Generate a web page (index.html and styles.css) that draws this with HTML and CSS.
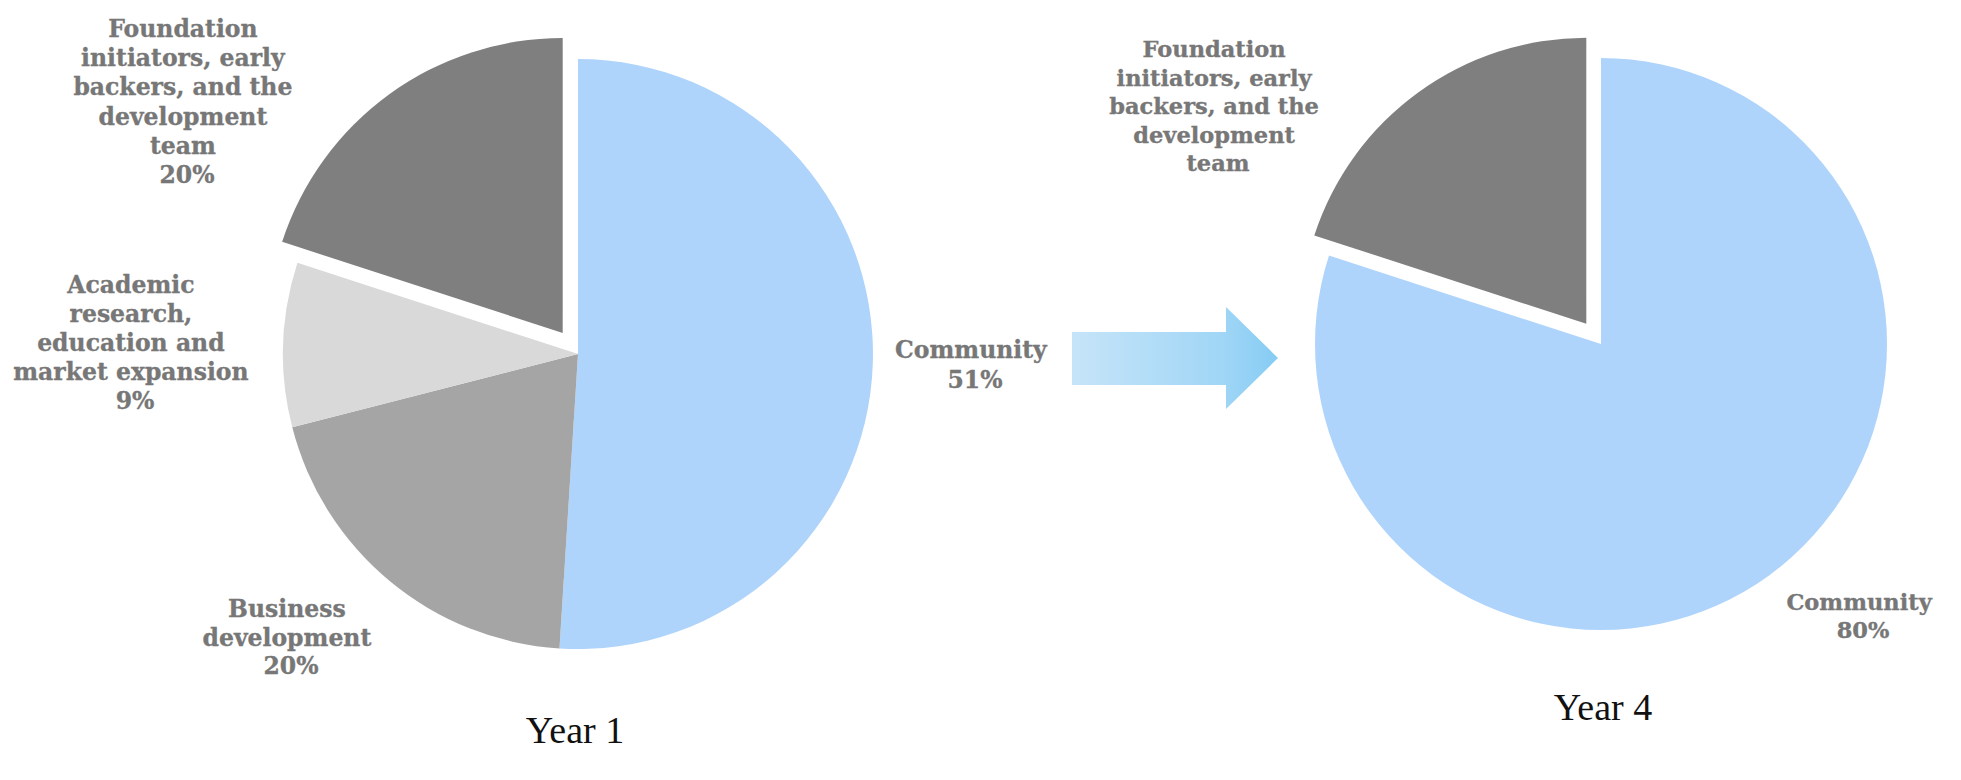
FILE: index.html
```html
<!DOCTYPE html>
<html lang="en">
<head>
<meta charset="utf-8">
<title>Token allocation: Year 1 vs Year 4</title>
<link rel="stylesheet" href="styles.css">
</head>
<body>
<main class="comparison">
  <figure class="chart chart--y1">
    <svg class="pie" width="1062" height="690" viewBox="0 0 1062 690" aria-label="Year 1 allocation">
      <path class="slice slice--community" d="M578,354 L578,59 A295,295 0 1 1 559.48,648.42 Z"/>
      <path class="slice slice--business" d="M578,354 L559.48,648.42 A295,295 0 0 1 292.27,427.36 Z"/>
      <path class="slice slice--academic" d="M578,354 L292.27,427.36 A295,295 0 0 1 297.44,262.84 Z"/>
      <path class="slice slice--foundation" d="M562.71,332.97 L282.15,241.81 A295,295 0 0 1 562.71,37.97 Z"/>
      <text class="label label--lg" text-anchor="middle">
        <tspan x="187" y="37">Foundation</tspan>
        <tspan x="187" y="66.2">initiators, early</tspan>
        <tspan x="187" y="95.4">backers, and the</tspan>
        <tspan x="187" y="124.6">development</tspan>
        <tspan x="187" y="153.8">team</tspan>
        <tspan x="187" y="183">20%</tspan>
      </text>
      <text class="label label--lg" text-anchor="middle">
        <tspan x="135" y="293">Academic</tspan>
        <tspan x="135" y="322">research,</tspan>
        <tspan x="135" y="351">education and</tspan>
        <tspan x="135" y="380">market expansion</tspan>
        <tspan x="135" y="409">9%</tspan>
      </text>
      <text class="label label--lg" text-anchor="middle">
        <tspan x="291" y="617">Business</tspan>
        <tspan x="291" y="646">development</tspan>
        <tspan x="291" y="674">20%</tspan>
      </text>
      <text class="label label--lg" text-anchor="middle">
        <tspan x="975" y="358">Community</tspan>
        <tspan x="975" y="388">51%</tspan>
      </text>
    </svg>
    <figcaption class="caption">Year 1</figcaption>
  </figure>

  <div class="transition" aria-hidden="true">
    <svg width="206" height="102" viewBox="0 0 206 102">
      <defs>
        <linearGradient id="arrowFill" x1="0" y1="0" x2="1" y2="0">
          <stop offset="0" stop-color="#c6e4f9"/>
          <stop offset="0.72" stop-color="#a1d6f6"/>
          <stop offset="1" stop-color="#86ccf4"/>
        </linearGradient>
      </defs>
      <path fill="url(#arrowFill)" d="M0,25 H154 V0 L206,51 L154,102 V78 H0 Z"/>
    </svg>
  </div>

  <figure class="chart chart--y4">
    <svg class="pie" width="671" height="670" viewBox="0 0 671 670" aria-label="Year 4 allocation">
      <path class="slice slice--community" d="M311,344 L311,58 A286,286 0 1 1 39.0,255.62 Z"/>
      <path class="slice slice--foundation" d="M296.30,323.77 L24.30,235.39 A286,286 0 0 1 296.30,37.77 Z"/>
      <text class="label label--sm" text-anchor="middle">
        <tspan x="-72" y="57">Foundation</tspan>
        <tspan x="-72" y="85.5">initiators, early</tspan>
        <tspan x="-72" y="114">backers, and the</tspan>
        <tspan x="-72" y="142.5">development</tspan>
        <tspan x="-72" y="171">team</tspan>
      </text>
      <text class="label label--sm" text-anchor="middle">
        <tspan x="573" y="610">Community</tspan>
        <tspan x="573" y="638">80%</tspan>
      </text>
    </svg>
    <figcaption class="caption">Year 4</figcaption>
  </figure>
</main>
</body>
</html>
```

FILE: styles.css
```css
html,
body {
  margin: 0;
  padding: 0;
  background: #ffffff;
}

body {
  width: 1961px;
  height: 780px;
  overflow: hidden;
  font-family: "DejaVu Serif", serif;
}

.comparison {
  display: flex;
  align-items: flex-start;
  margin: 0;
}

.chart {
  flex: none;
  margin: 0;
}

.chart--y1 {
  width: 1062px;
}

.chart--y4 {
  width: 671px;
}

.pie {
  display: block;
  overflow: visible;
}

.transition {
  flex: none;
  width: 228px;
  box-sizing: border-box;
  padding: 307px 0 0 10px;
}

.transition svg {
  display: block;
}

.slice--community {
  fill: #afd4fb;
}

.slice--business {
  fill: #a5a5a5;
}

.slice--academic {
  fill: #d9d9d9;
}

.slice--foundation {
  fill: #7f7f7f;
}

.label {
  font-family: "DejaVu Serif", serif;
  font-weight: 700;
  fill: #777777;
  stroke: #777777;
  stroke-width: 0.35px;
}

.label--lg {
  font-size: 23.5px;
}

.label--sm {
  font-size: 22.5px;
}

.caption {
  font-family: "Liberation Serif", "Times New Roman", serif;
  font-size: 38px;
  line-height: 44px;
  color: #111111;
  text-align: center;
}

.chart--y1 .caption {
  width: 590px;
  margin: 18px 0 0 280px;
}

.chart--y4 .caption {
  width: 560px;
  margin: 15px 0 0 33px;
}
```
